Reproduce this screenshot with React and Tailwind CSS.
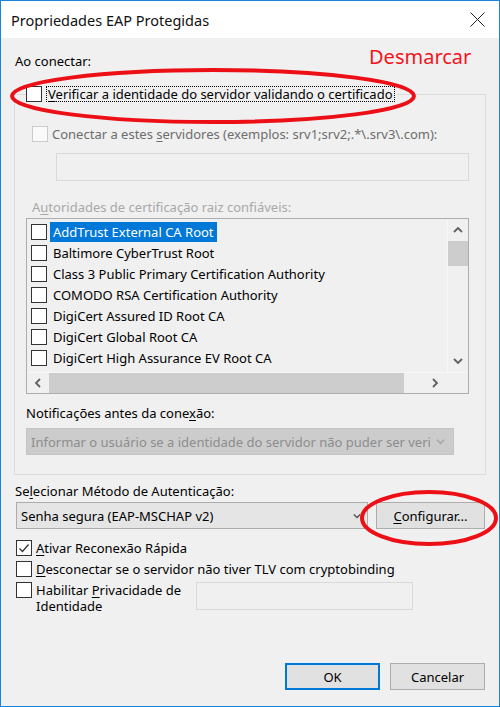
import React from 'react';

const Box = ({ checked, disabled }) => (
  <div
    className={`w-[16px] h-[16px] shrink-0 border flex items-center justify-center ${
      disabled ? 'border-[#cccccc] bg-[#fafafa]' : 'border-[#333333] bg-white'
    }`}
  >
    {checked && (
      <svg width="12" height="12" viewBox="0 0 12 12">
        <path d="M1.5 6.5 L4.5 9.5 L10.5 2.5" fill="none" stroke="#333" strokeWidth="1.3" />
      </svg>
    )}
  </div>
);

const Chevron = ({ dir, color = '#606060', size = 10 }) => {
  const d = {
    up: 'M1 7 L5 3 L9 7',
    down: 'M1 3 L5 7 L9 3',
    left: 'M7 1 L3 5 L7 9',
    right: 'M3 1 L7 5 L3 9',
  }[dir];
  return (
    <svg width={size} height={size} viewBox="0 0 10 10">
      <path d={d} fill="none" stroke={color} strokeWidth="1.8" />
    </svg>
  );
};

const certs = [
  'AddTrust External CA Root',
  'Baltimore CyberTrust Root',
  'Class 3 Public Primary Certification Authority',
  'COMODO RSA Certification Authority',
  'DigiCert Assured ID Root CA',
  'DigiCert Global Root CA',
  'DigiCert High Assurance EV Root CA',
];

export default function App() {
  return (
    <div className="relative w-[500px] h-[707px] border border-[#1883d7] bg-[#f0f0f0] flex flex-col text-[13px] leading-[16px] text-black font-['Noto_Sans','Liberation_Sans',sans-serif] overflow-hidden">
      {/* title bar */}
      <div className="h-[37px] shrink-0 bg-white flex items-center justify-between pl-[10px] pr-[14px]">
        <span className="text-[14.5px] text-[#111]">Propriedades EAP Protegidas</span>
        <svg width="15" height="15" viewBox="0 0 15 15">
          <path d="M0.5 0.5 L14.5 14.5 M14.5 0.5 L0.5 14.5" stroke="#222" strokeWidth="1" />
        </svg>
      </div>

      <div className="flex-1 flex flex-col px-[13px]">
        <div className="mt-[15px] h-[16px] pl-[1px]">Ao conectar:</div>

        {/* group box */}
        <div className="mt-[25px] border border-[#dcdcdc] flex flex-col pl-[11px]">
          <div className="-mt-[10px] h-[18px] flex items-center">
            <div className="flex items-center bg-[#f0f0f0] pr-[2px]">
              <Box />
              <span className="ml-[4px] px-[1px] border border-dotted border-black leading-[14px]">
                <u className="underline-offset-2">V</u>erificar a identidade do servidor validando o certificado
              </span>
            </div>
          </div>

          <div className="mt-[22px] h-[17px] flex items-center pl-[6px] text-[#6d6d6d]">
            <Box disabled />
            <span className="ml-[4px]">
              Conectar a estes <u className="underline-offset-2">s</u>ervidores (exemplos: srv1;srv2;.*\.srv3\.com):
            </span>
          </div>

          <div className="mt-[11px] ml-[30px] w-[413px] h-[28px] border border-[#d9d9d9] bg-[#f0f0f0]" />

          <div className="mt-[18px] h-[16px] pl-[6px] text-[#a8a8a8]">
            A<u className="underline-offset-2">u</u>toridades de certificação raiz confiáveis:
          </div>

          {/* certificate list */}
          <div className="mt-[3px] w-[443px] h-[176px] border border-[#adadad] flex flex-col">
            <div className="h-[153px] flex">
              <div className="flex-1 pt-[2px] pl-[4px] flex flex-col">
                {certs.map((c, i) => (
                  <div key={c} className="h-[21px] flex items-center">
                    <Box />
                    <span
                      className={`ml-[3px] px-[3px] h-[20px] flex items-center ${
                        i === 0 ? 'bg-[#0078d7] text-white' : ''
                      }`}
                    >
                      {c}
                    </span>
                  </div>
                ))}
              </div>
              <div className="w-[21px] flex flex-col border-l border-[#f7f7f7]">
                <div className="h-[22px] flex items-center justify-center">
                  <Chevron dir="up" />
                </div>
                <div className="h-[25px] bg-[#cdcdcd]" />
                <div className="flex-1" />
                <div className="h-[22px] flex items-center justify-center">
                  <Chevron dir="down" />
                </div>
              </div>
            </div>
            <div className="h-[21px] flex border-t border-[#f7f7f7]">
              <div className="w-[22px] flex items-center justify-center">
                <Chevron dir="left" />
              </div>
              <div className="w-[355px] bg-[#cdcdcd]" />
              <div className="flex-1 flex items-center justify-end pr-[7px]">
                <Chevron dir="right" />
              </div>
              <div className="w-[21px]" />
            </div>
          </div>

          <div className="mt-[11px] h-[16px]">
            Notificações antes da cone<u className="underline-offset-2">x</u>ão:
          </div>

          <div className="mt-[7px] mb-[19px] w-[428px] h-[27px] border border-[#c4c4c4] bg-[#cccccc] flex items-center justify-between pl-[4px] pr-[8px] text-[#8d8d8d]">
            <span className="whitespace-nowrap overflow-hidden w-[399px]">
              Informar o usuário se a identidade do servidor não puder ser veri
            </span>
            <Chevron dir="down" color="#a8a8a8" size={9} />
          </div>
        </div>

        <div className="mt-[8px] h-[16px] pl-[1px]">
          Se<u className="underline-offset-2">l</u>ecionar Método de Autenticação:
        </div>

        <div className="mt-[3px] flex items-center">
          <div className="ml-[2px] w-[352px] h-[27px] border border-[#acacac] bg-[#e5e5e5] flex items-center justify-between pl-[4px] pr-[6px]">
            <span>Senha segura (EAP-MSCHAP v2)</span>
            <Chevron dir="down" color="#555" size={8} />
          </div>
          <div className="ml-[8px] w-[109px] h-[27px] border border-[#adadad] bg-[#e1e1e1] flex items-center justify-center">
            <span>
              <u className="underline-offset-2">C</u>onfigurar...
            </span>
          </div>
        </div>

        <div className="mt-[10px] h-[17px] flex items-center pl-[2px]">
          <Box checked />
          <span className="ml-[4px]">
            <u className="underline-offset-2">A</u>tivar Reconexão Rápida
          </span>
        </div>

        <div className="mt-[4px] h-[17px] flex items-center pl-[2px]">
          <Box />
          <span className="ml-[4px]">
            <u className="underline-offset-2">D</u>esconectar se o servidor não tiver TLV com cryptobinding
          </span>
        </div>

        <div className="mt-[5px] flex items-start pl-[2px]">
          <Box />
          <div className="ml-[4px] w-[160px] flex flex-col">
            <span className="h-[16px]">
              Habilitar <u className="underline-offset-2">P</u>rivacidade de
            </span>
            <span className="h-[16px]">Identidade</span>
          </div>
          <div className="w-[217px] h-[28px] border border-[#d9d9d9] bg-[#f0f0f0]" />
        </div>

        <div className="mt-auto mb-[16px] flex justify-end gap-[10px] pr-[1px]">
          <div className="w-[95px] h-[27px] border-2 border-[#0078d7] bg-[#e1e1e1] flex items-center justify-center">
            OK
          </div>
          <div className="w-[95px] h-[27px] border border-[#adadad] bg-[#e1e1e1] flex items-center justify-center">
            Cancelar
          </div>
        </div>
      </div>

      {/* annotations */}
      <span className="absolute left-[368px] top-[43px] text-[20px] leading-[26px] text-[#f2151d]">Desmarcar</span>
      <svg className="absolute left-0 top-0 pointer-events-none" width="500" height="707">
        <ellipse cx="212" cy="95" rx="201" ry="26" fill="none" stroke="#ec0f16" strokeWidth="4" />
        <ellipse cx="428" cy="517" rx="67" ry="26" fill="none" stroke="#ec0f16" strokeWidth="4" />
      </svg>
    </div>
  );
}
